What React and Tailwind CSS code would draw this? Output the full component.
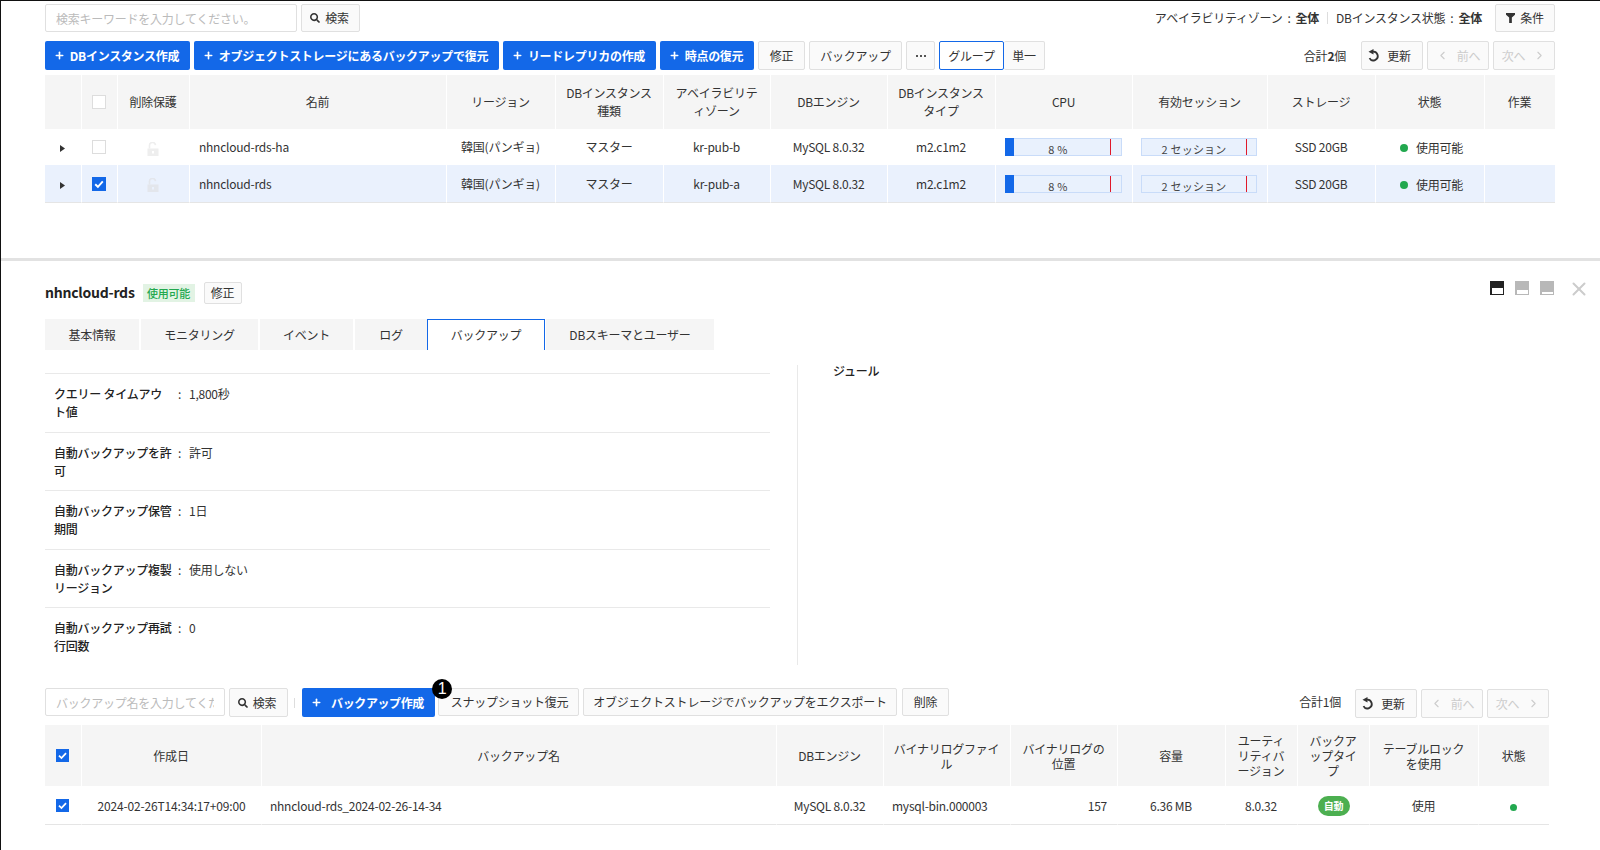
import React from "react";
import { ChevronLeft, ChevronRight, Plus, X } from "lucide-react";
import { FaSearch } from "react-icons/fa";

const Check = ({ on, cls }) => (
  <span className={`flex mx-auto items-center justify-center ${cls} ${on ? "bg-[#1368e8]" : "bg-white border border-[#ddd]"}`}>
    {on && (
      <svg viewBox="0 0 14 14" className="w-full h-full">
        <path d="M3.2 7.2 L5.9 9.8 L10.8 4.4" stroke="#fff" strokeWidth="1.9" fill="none" />
      </svg>
    )}
  </span>
);

const Lock = ({ on }) => (
  <svg viewBox="0 0 12 14" className={`w-3 h-[14px] inline-block align-middle ${on ? "text-[#e3e6ec]" : "text-[#eeeeee]"}`}>
    <path d="M2.5 6.5V3.8a3 3 0 0 1 6-.6" stroke="currentColor" strokeWidth="1.6" fill="none" />
    <path fillRule="evenodd" d="M0.5 6.5h11V14h-11z M5 9v2.5h2V9z" fill="currentColor" />
  </svg>
);

const Tri = () => (
  <svg viewBox="0 0 5 7" className="w-[5px] h-[7px] inline-block align-middle">
    <path d="M0 0L5 3.5L0 7z" fill="#333" />
  </svg>
);

const Refresh = () => (
  <svg viewBox="0 0 14 14" className="w-[13px] h-[13px]">
    <path d="M6 2.9 A4.7 4.7 0 1 1 2.7 9.8" stroke="#333" strokeWidth="2" fill="none" />
    <path d="M7 0L7 6L1.6 3z" fill="#333" />
  </svg>
);

const Btn = ({ w, children, cls = "" }) => (
  <button className={`${w} h-[29px] shrink-0 flex items-center justify-center gap-[5px] border border-[#e0e0e0] bg-[#fafafa] rounded-[2px] text-[12px] text-[#333] ${cls}`}>
    {children}
  </button>
);

const Primary = ({ w, children, gap = "gap-[5px]", track = "tracking-[-0.28px]" }) => (
  <button className={`${w} h-[29px] shrink-0 flex items-center justify-center ${gap} ${track} pr-[2px] bg-[#1368e8] rounded-[2px] text-[12px] font-bold text-white`}>
    <Plus size={11} strokeWidth={3.5} />
    {children}
  </button>
);

const Pager = ({ cls = "" }) => (
  <div className={`flex items-center gap-1 ${cls}`}>
    <Btn w="w-[62px]" cls="gap-[7px] pr-[6px]"><Refresh />更新</Btn>
    <Btn w="w-[62px]" cls="gap-[8px] !text-[#ccc]"><ChevronLeft size={13} color="#ccc" />前へ</Btn>
    <Btn w="w-[62px]" cls="gap-[8px] !text-[#ccc]">次へ<ChevronRight size={13} color="#ccc" /></Btn>
  </div>
);

const Bar = ({ text, fill }) => (
  <div className={`relative h-[18px] border border-[#c9dcf9] bg-[#e9f1fd] ${fill ? "w-[117px]" : "w-[116px]"}`}>
    {fill && <div className="absolute -left-px -top-px -bottom-px w-[9px] bg-[#1368e8]" />}
    <div className="w-[104px] text-center text-[11px] tracking-[0.2px] leading-[16px] pt-[2px] text-[#444]">{text}</div>
    <div className="absolute top-0 bottom-0 left-[104px] w-px bg-[#e0192a]" />
  </div>
);

const Dot = ({ cls = "w-2 h-2" }) => <span className={`inline-block rounded-full bg-[#22a84f] ${cls}`} />;

const th = "bg-[#f5f5f5] border-l border-white first:border-l-0 pl-[8px] pr-[9px] font-normal text-[#333] text-center align-middle break-all [line-break:anywhere]";
const td = "border-l border-white first:border-l-0 pl-[8px] pr-[9px] text-center align-middle whitespace-nowrap leading-[18px]";

const topCols = ["w-[36px]", "w-[36px]", "w-[72px]", "w-[257px]", "w-[109px]", "w-[108px]", "w-[107px]", "w-[117px]", "w-[108px]", "w-[137px]", "w-[135px]", "w-[108px]", "w-[109px]", "w-[71px]"];
const topHead = ["", "", "削除保護", "名前", "リージョン", "DBインスタンス種類", "アベイラビリティゾーン", "DBエンジン", "DBインスタンスタイプ", "CPU", "有効セッション", "ストレージ", "状態", "作業"];

const TopRow = ({ name, zone, on }) => {
  const c = `${td} ${on ? "border-b border-b-[#e5e5e5]" : ""}`;
  return (
    <tr className={on ? "bg-[#eaf1fd] h-[38px]" : "h-[36px]"}>
      <td className={c}><Tri /></td>
      <td className={c}><Check on={on} cls="w-[14px] h-[14px]" /></td>
      <td className={c}><Lock on={on} /></td>
      <td className={`${c} !text-left !pl-[9px]`}>{name}</td>
      <td className={c}>韓国(パンギョ)</td>
      <td className={c}>マスター</td>
      <td className={c}>{zone}</td>
      <td className={c}>MySQL 8.0.32</td>
      <td className={c}>m2.c1m2</td>
      <td className={`${c} !pl-[9px] !pr-0`}><Bar text="8 %" fill /></td>
      <td className={`${c} !pl-[8px] !pr-0`}><Bar text="2 セッション" /></td>
      <td className={c}>SSD 20GB</td>
      <td className={c}>
        <span className="inline-flex items-center gap-2 pt-[2px] pl-[4px]"><Dot />使用可能</span>
      </td>
      <td className={c}></td>
    </tr>
  );
};

const lowCols = ["w-[36px]", "w-[180px]", "w-[515px]", "w-[107px]", "w-[127px]", "w-[107px]", "w-[108px]", "w-[72px]", "w-[72px]", "w-[109px]", "w-[71px]"];
const lowHead = ["作成日", "バックアップ名", "DBエンジン", "バイナリログファイル", "バイナリログの位置", "容量", "ユーティリティバージョン", "バックアップタイプ", "テーブルロックを使用", "状態"];

const infos = [
  ["クエリー タイムアウト値", "1,800秒"],
  ["自動バックアップを許可", "許可"],
  ["自動バックアップ保管期間", "1日"],
  ["自動バックアップ複製リージョン", "使用しない"],
  ["自動バックアップ再試行回数", "0"],
];

const tabs = [
  ["基本情報", "w-[94px]"],
  ["モニタリング", "w-[117px] ml-[2px]"],
  ["イベント", "w-[93px] ml-[2px]"],
  ["ログ", "w-[72px] ml-[2px]"],
  ["バックアップ", "w-[118px]"],
  ["DBスキーマとユーザー", "w-[168px] ml-px"],
];

const WinIcon = ({ bg, inner }) => (
  <span className={`w-[14px] h-[14px] flex items-end justify-center pb-px ${bg}`}>
    <span className={`w-[11px] bg-white ${inner}`} />
  </span>
);

const rowB = "border-b border-b-[#e5e5e5] pt-px";

export default function App() {
  return (
    <div className="w-[1600px] h-[850px] overflow-hidden bg-white border-t border-l border-[#111] text-[12px] tracking-[-0.24px] text-[#333] font-['Noto_Sans_CJK_KR','Noto_Sans_CJK_JP',sans-serif]">
      {/* upper list */}
      <div className="h-[257px] pl-[44px] pr-[45px]">
        <div className="flex items-start pt-[3px]">
          <input
            placeholder="検索キーワードを入力してください。"
            className="w-[252px] h-[28px] border border-[#e0e0e0] rounded-[2px] px-[10px] text-[12px] placeholder:text-[#bbb] outline-none"
          />
          <Btn w="w-[59px]" cls="ml-1 !h-[28px] pr-[2px]"><FaSearch size={10} />検索</Btn>
          <div className="ml-auto flex items-center h-[28px]">
            <span>アベイラビリティゾーン</span>
            <span className="mx-[5px]">:</span>
            <span className="font-bold">全体</span>
            <span className="w-px h-[12px] bg-[#ddd] mx-[8px]" />
            <span>DBインスタンス状態</span>
            <span className="mx-[5px]">:</span>
            <span className="font-bold">全体</span>
            <Btn w="w-[60px]" cls="ml-[13px] !h-[28px]">
              <svg viewBox="0 0 10 11" className="w-[9px] h-[10px]"><path d="M0 0H10V2L6.5 5V11H3.5V5L0 2z" fill="#333" /></svg>
              条件
            </Btn>
          </div>
        </div>
        <div className="flex items-center gap-1 mt-[9px]">
          <Primary w="w-[145px]">DBインスタンス作成</Primary>
          <Primary w="w-[305px]">オブジェクトストレージにあるバックアップで復元</Primary>
          <Primary w="w-[153px]">リードレプリカの作成</Primary>
          <Primary w="w-[94px]">時点の復元</Primary>
          <Btn w="w-[47px]">修正</Btn>
          <Btn w="w-[93px]">バックアップ</Btn>
          <Btn w="w-[29px]" cls="!gap-[2px]">
            <span className="w-[2px] h-[2px] bg-[#555]" />
            <span className="w-[2px] h-[2px] bg-[#555]" />
            <span className="w-[2px] h-[2px] bg-[#555]" />
          </Btn>
          <div className="flex">
            <Btn w="w-[65px]" cls="!border-[#1368e8] !bg-white">グループ</Btn>
            <Btn w="w-[41px]" cls="border-l-0">単一</Btn>
          </div>
          <span className="ml-auto mr-[11px]">合計<b>2</b>個</span>
          <Pager />
        </div>
        <table className="table-fixed w-[1510px] mt-[5px] border-separate border-spacing-0">
          <colgroup>{topCols.map((c, i) => <col key={i} className={c} />)}</colgroup>
          <thead>
            <tr className="h-[54px]">
              {topHead.map((h, i) => (
                <th key={i} className={`${th} leading-[18px]`}>
                  {i === 1 ? <Check cls="w-[14px] h-[14px]" /> : h}
                </th>
              ))}
            </tr>
          </thead>
          <tbody>
            <TopRow name="nhncloud-rds-ha" zone="kr-pub-b" />
            <TopRow name="nhncloud-rds" zone="kr-pub-a" on />
          </tbody>
        </table>
      </div>

      <div className="h-[3px] bg-[#e2e2e2]" />

      {/* detail */}
      <div className="pl-[44px] pr-[14px]">
        <div className="flex items-center h-[22px] mt-[21px]">
          <span className="text-[14px] font-bold text-[#222] mb-[2px]">nhncloud-rds</span>
          <span className="ml-[8px] w-[52px] h-[18px] flex items-center justify-center bg-[#e2f3e4] text-[#22a84f] text-[11px] font-medium">使用可能</span>
          <Btn w="w-[38px]" cls="ml-[9px] !h-[22px]">修正</Btn>
          <div className="ml-auto flex items-start self-start -mr-[4px] -mt-[4px]">
            <div className="flex gap-[11px] mt-[3px] mr-[14px]">
              <WinIcon bg="bg-[#222]" inner="h-[6px]" />
              <WinIcon bg="bg-[#b8b8b8]" inner="h-[4px]" />
              <WinIcon bg="bg-[#b8b8b8]" inner="h-[2px]" />
            </div>
            <X size={22} strokeWidth={2.2} color="#ccc" />
          </div>
        </div>

        <div className="flex mt-[15px] h-[31px]">
          {tabs.map(([t, w], i) => (
            <div
              key={t}
              className={`${w} flex items-center justify-center ${i === 4 ? "bg-white border border-b-0 border-[#1368e8]" : "bg-[#f5f5f5]"}`}
            >
              {t}
            </div>
          ))}
        </div>

        <div className="flex h-[303px] mt-[12px] overflow-hidden">
          <div className="w-[725px] pt-[11px] shrink-0">
            {infos.map(([l, v]) => (
              <div key={l} className="h-[58.5px] border-t border-[#e9e9e9] pt-[11px] pl-[9px] flex items-start leading-[18px]">
                <span className="w-[118px] shrink-0 font-medium break-all text-[#222]">{l}</span>
                <span className="ml-[6px] w-[11px] shrink-0">:</span>
                <span>{v}</span>
              </div>
            ))}
          </div>
          <div className="ml-[27px] mt-[3px] w-px bg-[#e9e9e9] shrink-0" />
          <div className="ml-[35px] font-medium leading-[18px] text-[#222]">ジュール</div>
        </div>

        {/* backup toolbar */}
        <div className="w-[1504px] flex items-start mt-[23px]">
          <input
            placeholder="バックアップ名を入力してください。"
            className="w-[180px] h-[28px] border border-[#e0e0e0] rounded-[2px] px-[10px] text-[12px] placeholder:text-[#bbb] outline-none"
          />
          <Btn w="w-[59px]" cls="ml-1 pr-[3px]"><FaSearch size={10} />検索</Btn>
          <span className="w-px h-[10px] bg-[#ddd] ml-[6px] mt-[10px]" />
          <div className="relative ml-[7px]">
            <Primary w="w-[133px]" gap="gap-[9px]" track="tracking-[-0.4px]">バックアップ作成</Primary>
            <span className="absolute left-[130px] -top-[9px] w-5 h-5 rounded-full bg-black text-white flex items-center justify-center text-[16px] leading-none font-['Liberation_Sans',sans-serif]">1</span>
          </div>
          <Btn w="w-[141px]" cls="ml-[3px] !h-[28px] pl-[2px]">スナップショット復元</Btn>
          <Btn w="w-[314px]" cls="ml-1 !h-[28px]">オブジェクトストレージでバックアップをエクスポート</Btn>
          <Btn w="w-[47px]" cls="ml-[5px] !h-[28px]">削除</Btn>
          <span className="ml-auto mr-[14px] mt-[5px]">合計1個</span>
          <Pager cls="mt-px" />
        </div>

        <table className="table-fixed w-[1504px] mt-[7px] border-separate border-spacing-0">
          <colgroup>{lowCols.map((c, i) => <col key={i} className={c} />)}</colgroup>
          <thead>
            <tr className="h-[61px]">
              <th className={th}><Check on cls="w-[13px] h-[13px]" /></th>
              {lowHead.map((h) => <th key={h} className={`${th} leading-[15px]`}>{h}</th>)}
            </tr>
          </thead>
          <tbody>
            <tr className="h-[39px]">
              <td className={`${td} ${rowB}`}><Check on cls="w-[13px] h-[13px]" /></td>
              <td className={`${td} ${rowB} !px-0 tracking-[-0.16px] pr-[2px]`}>2024-02-26T14:34:17+09:00</td>
              <td className={`${td} ${rowB} !text-left`}>nhncloud-rds_2024-02-26-14-34</td>
              <td className={`${td} ${rowB}`}>MySQL 8.0.32</td>
              <td className={`${td} ${rowB} !text-left`}>mysql-bin.000003</td>
              <td className={`${td} ${rowB} !text-right !pr-[10px]`}>157</td>
              <td className={`${td} ${rowB}`}>6.36 MB</td>
              <td className={`${td} ${rowB}`}>8.0.32</td>
              <td className={`${td} ${rowB} !px-0`}>
                <span className="inline-flex w-[32px] h-[20px] items-center justify-center rounded-full bg-[#4caf50] text-white text-[10px] font-bold">自動</span>
              </td>
              <td className={`${td} ${rowB}`}>使用</td>
              <td className={`${td} ${rowB}`}><Dot cls="w-[7px] h-[7px]" /></td>
            </tr>
          </tbody>
        </table>
      </div>
    </div>
  );
}
